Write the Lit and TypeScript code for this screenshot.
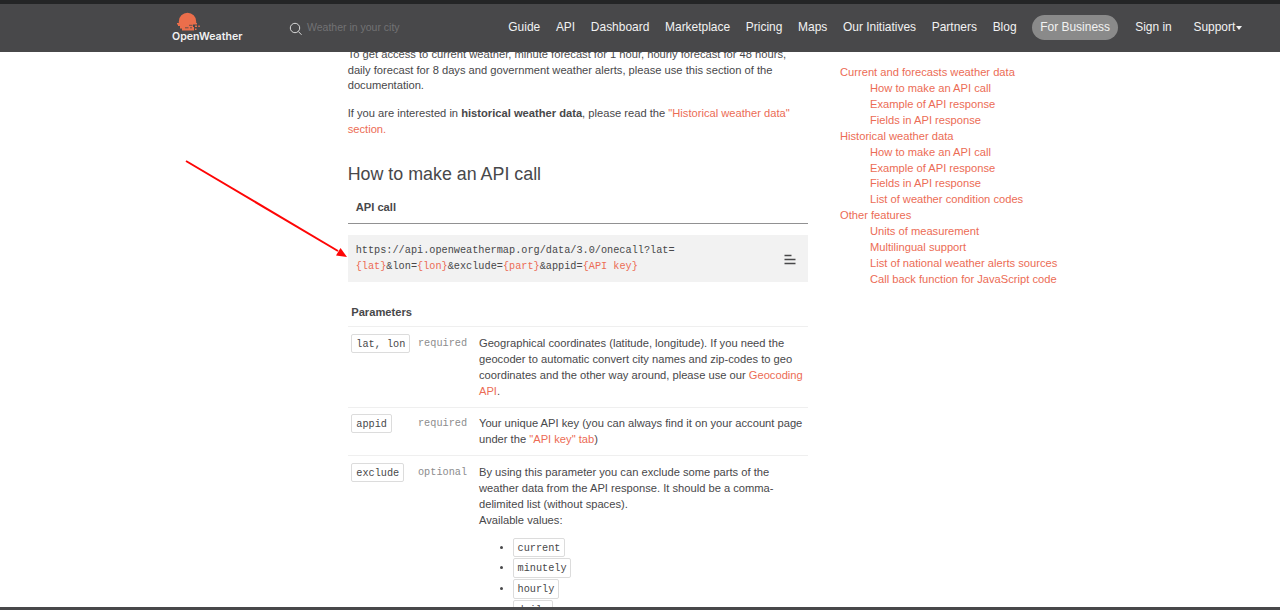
import { LitElement, html, css } from "lit";
import { customElement } from "lit/decorators.js";

const NAV = ["Guide", "API", "Dashboard", "Marketplace", "Pricing", "Maps", "Our Initiatives", "Partners", "Blog"];

const TOC = [
  { title: "Current and forecasts weather data", items: ["How to make an API call", "Example of API response", "Fields in API response"] },
  { title: "Historical weather data", items: ["How to make an API call", "Example of API response", "Fields in API response", "List of weather condition codes"] },
  { title: "Other features", items: ["Units of measurement", "Multilingual support", "List of national weather alerts sources", "Call back function for JavaScript code"] },
];

@customElement("ow-header")
class OwHeader extends LitElement {
  static styles = css`
    :host { display: block; flex: none; height: 52px; box-sizing: border-box; background: #48484a; border-top: 4px solid #242526; color: #f2f2f2; font: 11.96px/16px "Liberation Sans", sans-serif; }
    .bar { display: flex; height: 48px; box-sizing: border-box; padding-left: 172px; white-space: nowrap; }
    .logo { width: 117px; flex: none; padding-top: 8px; }
    .sun { display: block; margin-left: 5px; width: 24px; height: 20px; }
    .name { font: 600 10.6px/12px "Inter", sans-serif; margin-top: -1px; }
    .search { width: 219.3px; flex: none; display: flex; align-items: center; color: #727274; font-size: 10.5px; padding-bottom: 2px; box-sizing: border-box; }
    .lens { width: 14px; height: 14px; margin: 3px 4px 0 0; }
    .nav { display: flex; align-items: center; gap: 15.7px; padding-bottom: 2px; }
    .pill { background: #8a8a8a; border-radius: 13px; padding: 4px 8px 5px; }
    .sign { margin-left: 1.5px; }
    .support { margin-left: 6px; display: flex; align-items: center; }
    .caret { border: 3.5px solid transparent; border-top: 4px solid #f2f2f2; border-bottom: 0; margin: 2px 0 0 1px; }
  `;
  render() {
    return html`<div class="bar">
      <div class="logo">
        <svg class="sun" viewBox="0 0 24 20">
          <path fill="#eb6e4b" d="M1.8 11V9.5A8.7 8.7 0 0 1 19.2 9.500V11H20V12.500H16V15H17V18.500H5V16.500H3V14H1V12.500H0V11Z"/>
          <path d="M12 13.300H15.500M8 15.800H11.500M13 15.800H15" stroke="#48484a" stroke-width="0.8"/>
          <path d="M18 14.200H20M21.300 14.200H22.800M18 17.200H19.500" stroke="#eb6e4b" stroke-width="1.4"/></svg>
        <div class="name">OpenWeather</div>
      </div>
      <div class="search">
        <svg class="lens" viewBox="0 0 14 14" fill="none" stroke="#d8d8d8" stroke-width="1"><circle cx="6" cy="6" r="4.7"/><path d="M9.4 9.5L12.5 12.8"/></svg>
        <span>Weather in your city</span>
      </div>
      <nav class="nav">
        ${NAV.map((n) => html`<span>${n}</span>`)}
        <span class="pill">For Business</span><span class="sign">Sign in</span>
        <span class="support">Support<i class="caret"></i></span>
      </nav>
    </div>`;
  }
}

@customElement("app-root")
class AppRoot extends LitElement {
  static styles = css`
    :host { display: flex; flex-direction: column; position: relative; width: 1280px; height: 610px; overflow: hidden; background: #fff; color: #48484a; font: 11.17px/15.94px "Liberation Sans", sans-serif; white-space: nowrap; }
    .view { height: 555px; flex: none; overflow: hidden; display: flex; padding-left: 347.7px; }
    .foot { height: 3px; background: #48484a; }
    .main { width: 460.5px; flex: none; margin-top: -5.4px; }
    a { color: #ec6c55; }
    p { margin: 0 0 11.3px; }
    h2 { font-weight: 400; font-size: 17.85px; line-height: 22px; margin: 25.3px 0 0; }
    .tab { font-weight: 700; padding: 15px 8px 7px; border-bottom: 1.5px solid #919192; }
    .code, .chip, .req { font-family: "Liberation Mono", monospace; font-size: 10.23px; }
    .code { display: flex; justify-content: space-between; align-items: center; background: #f2f2f2; margin-top: 11.5px; padding: 0 12px 0 8px; height: 47px; }
    .menu { width: 12px; height: 12px; margin-top: 3px; }
    h3 { font-size: 11.16px; line-height: 16px; margin: 22px 0 0; padding: 0 3.5px 6px; }
    .row { display: grid; grid-template-columns: 66.5px 61px 1fr; padding: 8.5px 0 7.2px 3.8px; border-top: 1px solid #efefef; }
    .chip { display: inline-block; border: 1px solid #dcdcdc; border-radius: 2px; padding: 2px 3.8px 0; height: 15.4px; line-height: 15px; }
    .cell { margin-top: -2.3px; }
    .req { color: #8c8c8d; }
    ul { margin: 9px 0 0; padding-left: 33.8px; }
    li { height: 20.8px; }
    li::marker { font-size: 10px; }
    .toc { margin-left: 31.8px; padding-top: 12.8px; line-height: 15.96px; }
    .sub { padding-left: 30px; }
    .arrow { position: absolute; left: 180px; top: 155px; width: 170px; height: 108px; }
  `;
  render() {
    return html`<ow-header></ow-header>
      <div class="view">
        <main class="main">
          <p>To get access to current weather, minute forecast for 1 hour, hourly forecast for 48 hours,<br>daily forecast for 8 days and government weather alerts, please use this section of the<br>documentation.</p>
          <p>If you are interested in <b>historical weather data</b>, please read the <a>"Historical weather data"<br>section.</a></p>
          <h2>How to make an API call</h2>
          <div class="tab">API call</div>
          <div class="code"><div>https://api.openweathermap.org/data/3.0/onecall?lat=<br><a>{lat}</a>&amp;lon=<a>{lon}</a>&amp;exclude=<a>{part}</a>&amp;appid=<a>{API key}</a></div>
            <svg class="menu" viewBox="0 0 12 12" stroke="#48484a" stroke-width="1.3"><path d="M0.500 1.500H7.500M0.500 5.500H11.500M0.500 9.500H11.500"/></svg></div>
          <h3>Parameters</h3>
          <div class="row"><div class="cell"><span class="chip">lat, lon</span></div><span class="req">required</span>
            <div>Geographical coordinates (latitude, longitude). If you need the<br>geocoder to automatic convert city names and zip-codes to geo<br>coordinates and the other way around, please use our <a>Geocoding<br>API</a>.</div></div>
          <div class="row"><div class="cell"><span class="chip">appid</span></div><span class="req">required</span>
            <div>Your unique API key (you can always find it on your account page<br>under the <a>"API key" tab</a>)</div></div>
          <div class="row"><div class="cell"><span class="chip">exclude</span></div><span class="req">optional</span>
            <div>By using this parameter you can exclude some parts of the<br>weather data from the API response. It should be a comma-<br>delimited list (without spaces).<br>Available values:
              <ul>${["current", "minutely", "hourly", "daily"].map((v) => html`<li><span class="chip">${v}</span></li>`)}</ul></div></div>
        </main>
        <aside class="toc">${TOC.map((g) => html`<div><a>${g.title}</a></div>${g.items.map((i) => html`<div class="sub"><a>${i}</a></div>`)}`)}</aside>
      </div>
      <div class="foot"></div>
      <svg class="arrow" viewBox="0 0 170 108"><path d="M6 6L158 96" stroke="#fe0505" stroke-width="2"/><path d="M167 102L156 100.500L160.500 93Z" fill="#fe0505"/></svg>`;
  }
}
